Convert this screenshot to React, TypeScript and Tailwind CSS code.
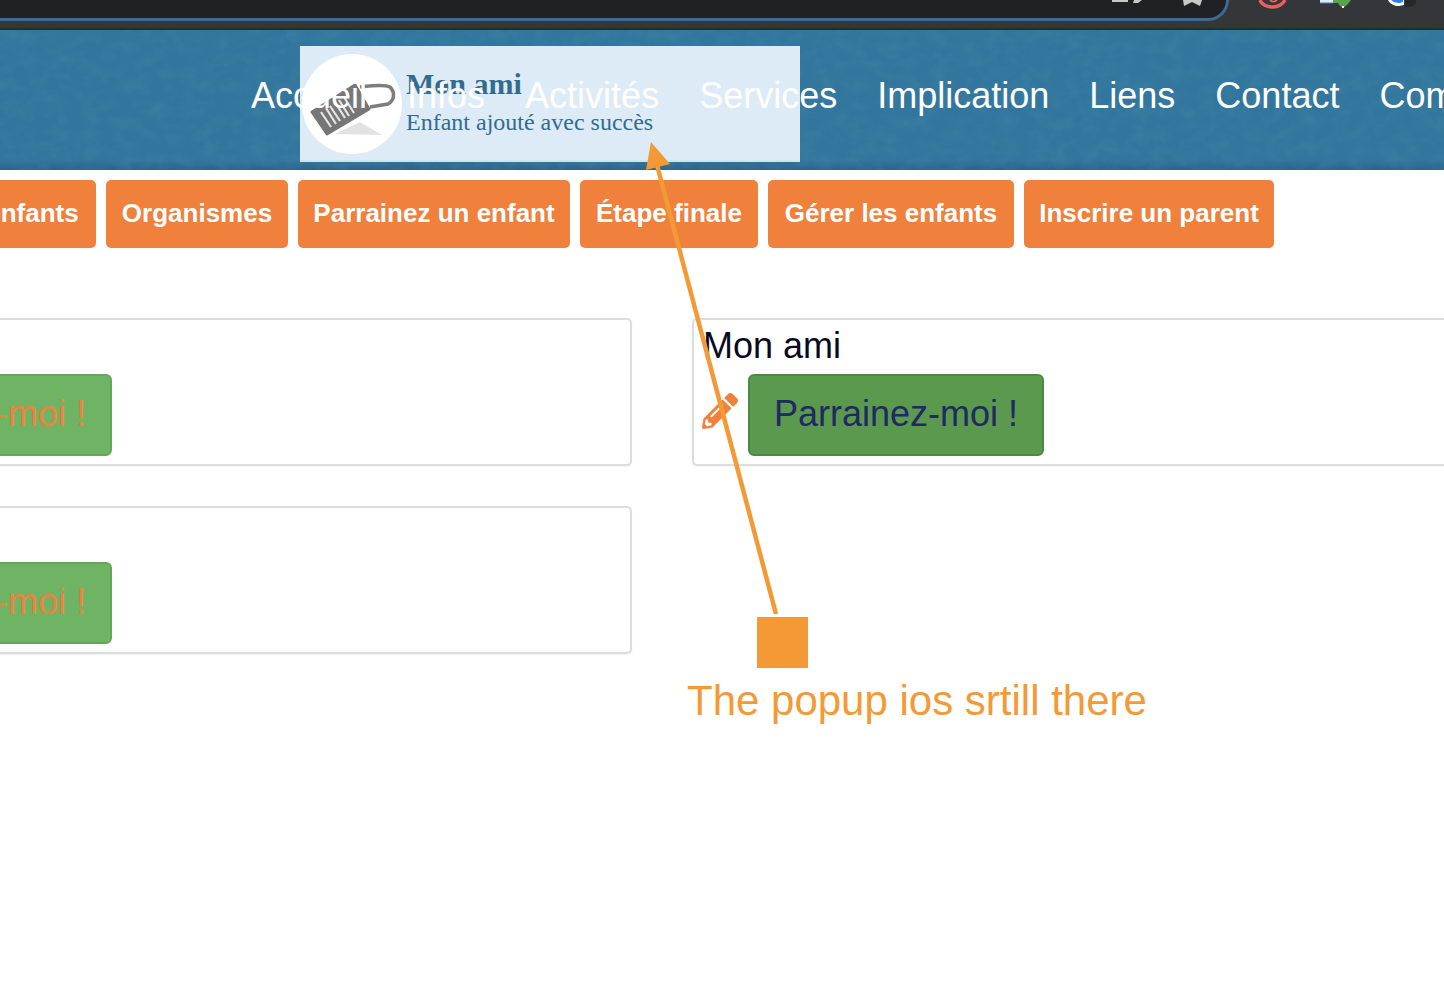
import { FaPencilAlt } from "react-icons/fa";

const navItems = ["Accueil", "Infos", "Activités", "Services", "Implication", "Liens", "Contact", "Communauté"];

function Tab({ label, width }: { label: string; width: string }) {
  return (
    <div className={`flex h-[68px] items-center justify-center rounded-[5px] bg-[#f0813c] pb-[2px] text-[26px] font-bold text-white ${width}`}>
      {label}
    </div>
  );
}

function BrowserBar() {
  return (
    <div className="relative h-[30px] shrink-0 overflow-hidden border-b-2 border-[#2a2b2e] bg-[#35363a]">
      <div className="h-[21px] w-[1229px] rounded-br-[24px] border-r-[3px] border-b-[3px] border-[#3f6a8f] bg-[#202124]" />
      <svg className="absolute left-0 top-0" width="1444" height="28" viewBox="0 0 1444 28">
        <path d="M1112 0h30l-4 3h-5l1-3h-6v2h-16z" fill="#c8c8c8" />
        <path d="M1183 0h19l-2 6-8-4-8 4z" fill="#c9c9c9" />
        <path d="M1260 0c2 5 8 7 13 7 5 0 10-3 12-7" fill="none" stroke="#e8625c" strokeWidth="3.5" />
        <path d="M1270 0c2 2 5 2 7 0" fill="none" stroke="#e8625c" strokeWidth="2" />
        <rect x="1320" y="0" width="14" height="3" fill="#dfe8f7" />
        <path d="M1320 3h13" stroke="#3f78d0" strokeWidth="1" />
        <path d="M1333 0h18l-4 5-4 3-3-2-2-3h-5z" fill="#5aa24c" />
        <rect x="1342" y="6" width="2" height="2" fill="#fff" />
        <path d="M1388 0c2 4 6 6 11 6l5-1V0z" fill="#fff" />
        <path d="M1391 0c2 2 5 3 9 3l3-1V0z" fill="#2f7de0" />
        <path d="M1405 0h11v3c-2 3-5 4-9 4h-2z" fill="#26272a" />
      </svg>
    </div>
  );
}

function Texture() {
  return (
    <svg className="absolute inset-0 h-full w-full" width="1444" height="140">
      <defs>
        <filter id="grain" x="0" y="0" width="100%" height="100%">
          <feTurbulence type="fractalNoise" baseFrequency="0.06 0.08" numOctaves="6" seed="8" />
          <feColorMatrix type="matrix" values="0 0 0 0 0.10  0 0 0 0 0.30  0 0 0 0 0.45  1.5 0 0 0 -0.55" />
        </filter>
      </defs>
      <rect width="1444" height="140" filter="url(#grain)" opacity="0.28" />
    </svg>
  );
}

function Logo() {
  return (
    <svg width="100" height="100" viewBox="0 0 100 100">
      <circle cx="50" cy="50" r="50" fill="#ffffff" />
      <g className="blur-[0.6px]">
        <path d="M33 80 58 68 80 81Z" fill="#e2e2e2" />
        <path d="M10 58 53 31 67 55 25 80Z" fill="#777777" stroke="#777777" strokeWidth="3" strokeLinejoin="round" />
        <path d="M19 58 29 73M24 54 34 70M28 52 38 67M33 48 43 64M37 46 47 62M42 43 52 59" stroke="#e6e6e6" strokeWidth="2.2" />
        <path d="M58 33 C68 32 82 30 88 33 C93 38 93 46 86 50 L68 53" fill="none" stroke="#7d7d7d" strokeWidth="3.5" />
      </g>
    </svg>
  );
}

function Card({ title, active }: { title?: string; active?: boolean }) {
  return (
    <div className="h-[148px] rounded-[5px] border-2 border-[#dddddd] bg-white pl-2 shadow-[0_1px_2px_rgba(0,0,0,0.05)]">
      <div className="h-[54px] pl-[1px] pt-[4px] text-[36px] leading-[44px] text-[#0a0a1e]">{title}</div>
      <div className="flex items-center gap-[10px]">
        <FaPencilAlt className="h-[36px] w-[36px] translate-y-[-4px] text-[#f0813c]" />
        <div
          className={
            active
              ? "flex h-[82px] w-[296px] items-center justify-center rounded-[6px] border-2 border-[#4a8a42] bg-[#5a994e] pb-[2px] text-[36px] text-[#1f2a63]"
              : "flex h-[82px] w-[296px] items-center justify-center rounded-[6px] border-2 border-[#63a857] bg-[#6fb364] pb-[2px] text-[36px] text-[#f0813c]"
          }
        >
          Parrainez-moi !
        </div>
      </div>
    </div>
  );
}

export default function App() {
  return (
    <div className="relative flex h-[998px] w-[1444px] flex-col overflow-hidden bg-white font-['Liberation_Sans',Arial,sans-serif]">
      <BrowserBar />

      <header className="relative h-[140px] shrink-0 bg-[linear-gradient(to_bottom,#32769d_0,#32769d_130px,#2a658a_140px)]">
        <Texture />
        <div className="absolute left-[300px] top-[16px] flex h-[116px] w-[500px] gap-[4px] border-b-2 border-[#cfe6ef] bg-[#ddebf6] pl-[2px] pt-[8px]">
          <Logo />
          <div className="font-['Liberation_Serif',serif] text-[#336b8f]">
            <div className="pt-[12px] text-[30px] font-bold leading-[36px]">Mon ami</div>
            <div className="pt-[6px] text-[24px] leading-[28px]">Enfant ajouté avec succès</div>
          </div>
        </div>
        <nav className="relative flex gap-[40px] whitespace-nowrap pl-[251px] pt-[44px] text-[36px] leading-[44px] text-white">
          {navItems.map((item) => (
            <span key={item}>{item}</span>
          ))}
        </nav>
      </header>

      <div className="ml-[-83px] mt-[10px] flex shrink-0 gap-[10px] whitespace-nowrap">
        <Tab label="Les enfants" width="w-[179px]" />
        <Tab label="Organismes" width="w-[182px]" />
        <Tab label="Parrainez un enfant" width="w-[272px]" />
        <Tab label="Étape finale" width="w-[178px]" />
        <Tab label="Gérer les enfants" width="w-[246px]" />
        <Tab label="Inscrire un parent" width="w-[250px]" />
      </div>

      <div className="ml-[-240px] mt-[70px] grid w-[1804px] grid-cols-2 gap-x-[60px] gap-y-[40px]">
        <Card />
        <Card title="Mon ami" active />
        <Card />
      </div>

      <svg className="absolute left-0 top-0" width="1444" height="998" viewBox="0 0 1444 998">
        <path d="M776 614 657 165" stroke="#f39a36" strokeWidth="4.5" fill="none" />
        <path d="M651 142 670 164 646 170Z" fill="#f39a36" />
        <rect x="757" y="617" width="51" height="51" fill="#f39a36" />
      </svg>
      <div className="absolute left-[687px] top-[677px] text-[42px] leading-[48px] text-[#f39a36]">The popup ios srtill there</div>
    </div>
  );
}
